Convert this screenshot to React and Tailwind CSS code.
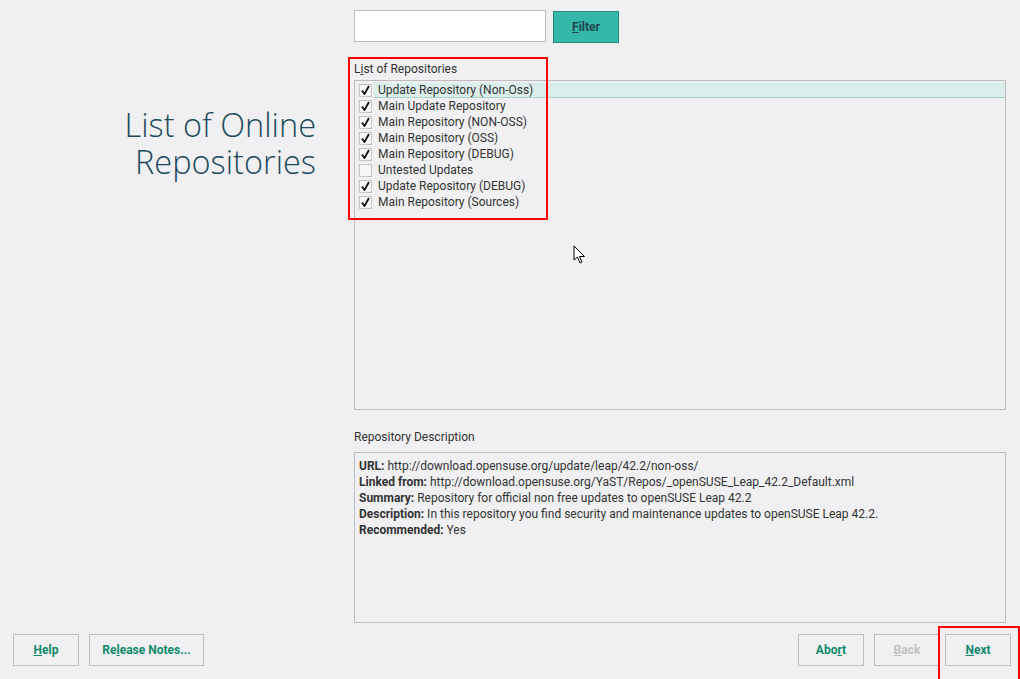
import React from 'react';

const repos = [
  { name: 'Update Repository (Non-Oss)', checked: true },
  { name: 'Main Update Repository', checked: true },
  { name: 'Main Repository (NON-OSS)', checked: true },
  { name: 'Main Repository (OSS)', checked: true },
  { name: 'Main Repository (DEBUG)', checked: true },
  { name: 'Untested Updates', checked: false },
  { name: 'Update Repository (DEBUG)', checked: true },
  { name: 'Main Repository (Sources)', checked: true },
];

function Check({ checked }) {
  return (
    <span className="flex h-[13px] w-[13px] shrink-0 items-center justify-center border border-[#c4c4c4] bg-[#f6f6f7]">
      {checked && (
        <svg width="9" height="10" viewBox="0 0 9 10">
          <path d="M1 5.5 L3.5 9 L8 1" fill="none" stroke="#111" strokeWidth="1.8" />
        </svg>
      )}
    </span>
  );
}

function Btn({ children, className = '', disabled }) {
  return (
    <button
      className={`h-[32px] border border-[#bdbdbd] bg-[#f0f0f2] text-[12px] font-bold ${
        disabled ? 'text-[#c2c2c2]' : 'text-[#0e8a6b]'
      } ${className}`}
    >
      {children}
    </button>
  );
}

export default function App() {
  return (
    <div
      className="relative flex h-[679px] w-[1020px] flex-col overflow-hidden bg-[#f0f0f2] text-[12px] text-[#333]"
      style={{ fontFamily: 'Roboto, "Liberation Sans", sans-serif' }}
    >
      <div className="flex h-[626px]">
        <div className="flex w-[354px] justify-end pr-[38px] pt-[106px]">
          <h1
            className="text-right text-[32.5px] font-light leading-[37px] text-[#1c4a5b]"
            style={{ fontFamily: '"Open Sans", Lato, sans-serif' }}
          >
            <div>List of Online</div>
            <div>Repositories</div>
          </h1>
        </div>

        <div className="flex flex-1 flex-col pr-[14px] pt-[10px]">
          <div className="flex items-start gap-[7px]">
            <input className="h-[32px] w-[192px] border border-[#bdbdbd] bg-white outline-none" />
            <button className="mt-[1px] h-[32px] w-[66px] border border-[#1f8c7d] bg-[#35b8aa] text-[12px] font-bold text-[#1d4549]">
              <span className="underline">F</span>ilter
            </button>
          </div>

          <div className="mt-[18px] leading-[16px]">
            L<span className="underline">i</span>st of Repositories
          </div>
          <div className="mt-[3px] h-[330px] border border-[#bdbdbd] pt-[1px]">
            {repos.map((r, i) => (
              <div key={r.name} className="flex h-[16px] items-center pl-[4px]">
                <Check checked={r.checked} />
                <span
                  className={`ml-[2px] flex h-[16px] flex-1 items-center pl-[4px] leading-[16px] ${
                    i === 0 ? 'border-y border-t-[#e6f2f0] border-b-[#a9cfc9] bg-[#dbeeeb]' : ''
                  }`}
                >
                  {r.name}
                </span>
              </div>
            ))}
          </div>

          <div className="mt-[19px] leading-[16px]">Repository Description</div>
          <div className="mt-[7px] h-[171px] border border-[#bdbdbd] px-[4px] pt-[5px] leading-[16px]">
            <div>
              <b>URL:</b> http://download.opensuse.org/update/leap/42.2/non-oss/
            </div>
            <div>
              <b>Linked from:</b> http://download.opensuse.org/YaST/Repos/_openSUSE_Leap_42.2_Default.xml
            </div>
            <div>
              <b>Summary:</b> Repository for official non free updates to openSUSE Leap 42.2
            </div>
            <div>
              <b>Description:</b> In this repository you find security and maintenance updates to openSUSE Leap 42.2.
            </div>
            <div>
              <b>Recommended:</b> Yes
            </div>
          </div>
        </div>
      </div>

      <div className="mt-[8px] flex items-start pl-[13px] pr-[9px]">
        <Btn className="w-[66px]">
          <span className="underline">H</span>elp
        </Btn>
        <Btn className="ml-[10px] w-[115px]">
          Re<span className="underline">l</span>ease Notes...
        </Btn>
        <div className="flex-1" />
        <Btn className="w-[66px]">
          Abo<span className="underline">r</span>t
        </Btn>
        <Btn className="ml-[10px] w-[66px]" disabled>
          <span className="underline">B</span>ack
        </Btn>
        <Btn className="ml-[5px] w-[66px]">
          <span className="underline">N</span>ext
        </Btn>
      </div>

      {/* red annotation boxes */}
      <div className="pointer-events-none absolute left-[348px] top-[57px] h-[163px] w-[200px] border-2 border-[#ff0000]" />
      <div className="pointer-events-none absolute left-[938px] top-[626px] h-[60px] w-[82px] border-2 border-[#ff0000]" />

      {/* mouse pointer */}
      <svg className="pointer-events-none absolute left-[573px] top-[245px]" width="14" height="20" viewBox="0 0 14 20">
        <path d="M1 1 L1 15 L4.5 12 L7 18 L9 17 L6.5 11.5 L11.5 11.5 Z" fill="#fff" stroke="#000" strokeWidth="1" strokeLinejoin="round" />
      </svg>
    </div>
  );
}
